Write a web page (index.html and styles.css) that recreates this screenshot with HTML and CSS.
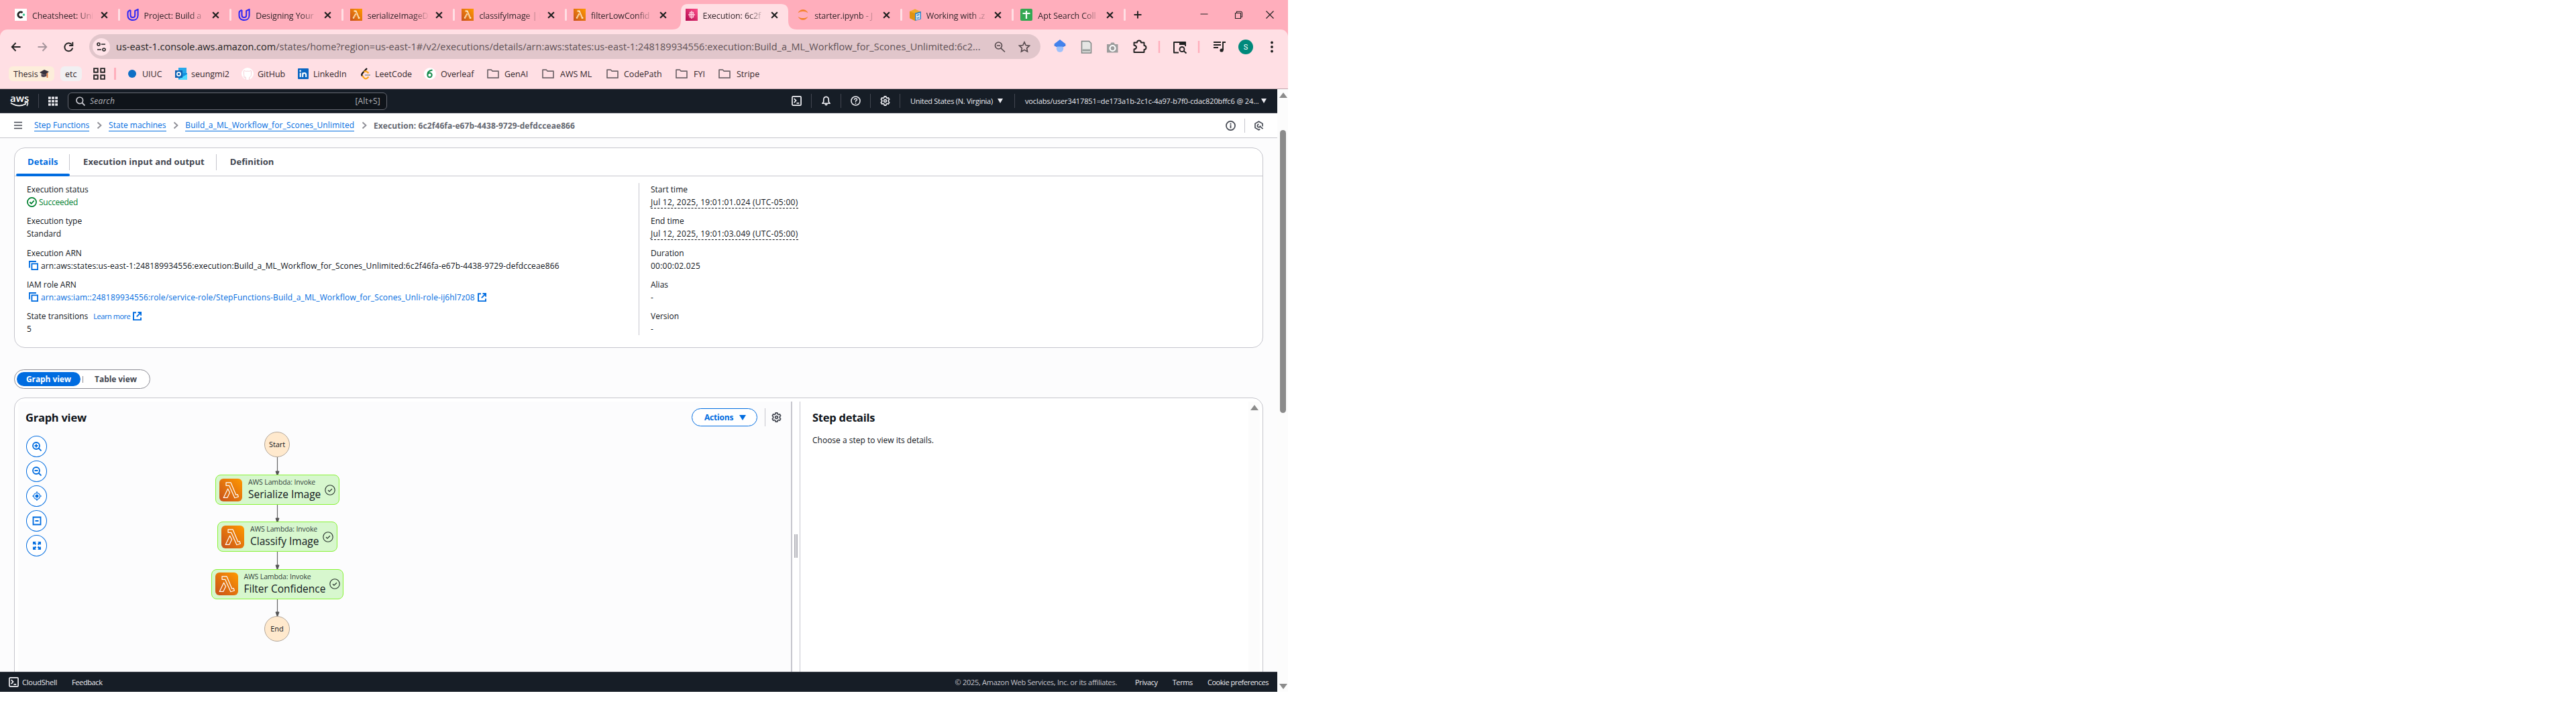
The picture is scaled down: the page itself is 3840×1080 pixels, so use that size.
FILE: index.html
```html
<!DOCTYPE html>
<html lang="en">
<head>
<meta charset="utf-8">
<title>Execution details | Step Functions</title>
<link rel="stylesheet" href="styles.css">
</head>
<body>
<svg class="sprite" aria-hidden="true">
  <linearGradient id="orange" x1="0" y1="1" x2="1" y2="0"><stop offset="0" stop-color="#c8511b"/><stop offset="1" stop-color="#ff9900"/></linearGradient>
  <linearGradient id="magenta" x1="0" y1="1" x2="1" y2="0"><stop offset="0" stop-color="#b0084d"/><stop offset="1" stop-color="#ff4f8b"/></linearGradient>
  <symbol id="lambda" viewBox="0 0 34 34"><g fill="none" stroke="#fff" stroke-width="1.2" stroke-linejoin="round"><path d="M10 5.8h7l7.8 18.4 2.4-.7 1.2 3.5-5.5 1.7-8.3-18.4H10z"/><path d="M12.6 15.2 6.2 28.4h5.6l3.7-7.7z"/></g></symbol>
  <symbol id="lambda-fav" viewBox="0 0 18 18"><rect width="18" height="18" fill="url(#orange)"/><path d="M5.500 3.500h3l4.300 10.300 1.600-.3M8.500 7.500l-4 7" fill="none" stroke="#ffe9c9" stroke-width="2.200"/><path d="M8.500 5l3.500 8.500M8.300 8.500l-2.800 5" fill="none" stroke="#e07a12" stroke-width=".6"/></symbol>
  <symbol id="udacity" viewBox="0 0 18 18"><g fill="none" stroke="#2f27f5" stroke-width="2"><path d="M5.500 2C2.500 3 1.500 4 1.500 6v4c0 3 1.800 5.600 4.700 6.600"/><path d="M5.500 2v7.500c0 2.400 1.500 3.600 3.300 3.600s3.400-1.200 3.400-3.600V3.200L16.600 1v9c0 4.500-3.500 7-7.500 7-1.200 0-2.200-.2-3-.5"/></g></symbol>
  <symbol id="x" viewBox="0 0 12 12"><path d="M2 2l8 8M10 2l-8 8" stroke="#1f1f1f" stroke-width="2"/></symbol>
  <symbol id="folder" viewBox="0 0 18 16"><path d="M1 2.200h5.500l1.800 2H17v10H1z" fill="none" stroke="#70656a" stroke-width="1.700" stroke-linejoin="round"/></symbol>
  <symbol id="shell" viewBox="0 0 16 16"><rect x="1" y="1" width="14" height="14" rx="1.500" fill="none" stroke="#f3f3f7" stroke-width="1.800"/><path d="M4 4.500L7 7.500 4 10.800M8 11.500h4" fill="none" stroke="#f3f3f7" stroke-width="1.800"/></symbol>
  <symbol id="gear" viewBox="0 0 16 16"><path d="M6.600 1h2.800l.5 1.900 1.400.8 1.900-.6 1.400 2.500-1.400 1.400v2l1.400 1.400-1.400 2.500-1.900-.6-1.400.8-.5 1.900H6.600l-.5-1.900-1.400-.8-1.900.6-1.400-2.500L2.800 9V7L1.400 5.600l1.400-2.500 1.900.6 1.400-.8z" fill="none" stroke="currentColor" stroke-width="1.800" stroke-linejoin="round"/><circle cx="8" cy="8" r="2" fill="none" stroke="currentColor" stroke-width="1.800"/></symbol>
  <symbol id="ext" viewBox="0 0 13 13"><path d="M5 1.200H1v11h11V8.500M7.500 1h4.700v4.700M12 1.200L5.800 7.400" fill="none" stroke="#006ce0" stroke-width="1.900"/></symbol>
  <symbol id="copy" viewBox="0 0 14 14"><path d="M.9 10.500V1h10" fill="none" stroke="#006ce0" stroke-width="1.800"/><rect x="4.400" y="4.400" width="8.700" height="8.700" fill="none" stroke="#006ce0" stroke-width="1.800"/></symbol>
  <symbol id="chev" viewBox="0 0 8 12"><path d="M1.500 1.500L6.500 6l-5 4.500" fill="none" stroke="#8c8c94" stroke-width="1.800"/></symbol>
  <symbol id="done" viewBox="0 0 16 16"><circle cx="8" cy="8" r="7.200" fill="none" stroke="#232f2a" stroke-width="1.100"/><path d="M5 8.200l2 1.900 4-3.800" fill="none" stroke="#232f2a" stroke-width="1.200"/></symbol>
</svg>

<div class="window">
  <div class="tabstrip">
    <div class="tab"><svg viewBox="0 0 18 18"><rect width="18" height="18" fill="#fff"/><path d="M11.500 6A4 4 0 1 0 11.500 12" fill="none" stroke="#222" stroke-width="2.800"/><circle cx="13.500" cy="9" r="1.800" fill="#3fc38e"/></svg><span>Cheatsheet: Uni</span><svg class="x"><use href="#x"/></svg></div>
    <div class="tab"><svg><use href="#udacity"/></svg><span>Project: Build a</span><svg class="x"><use href="#x"/></svg></div>
    <div class="tab"><svg><use href="#udacity"/></svg><span>Designing Your</span><svg class="x"><use href="#x"/></svg></div>
    <div class="tab"><svg><use href="#lambda-fav"/></svg><span>serializeImageD</span><svg class="x"><use href="#x"/></svg></div>
    <div class="tab"><svg><use href="#lambda-fav"/></svg><span>classifyImage | F</span><svg class="x"><use href="#x"/></svg></div>
    <div class="tab bare"><svg><use href="#lambda-fav"/></svg><span>filterLowConfid</span><svg class="x"><use href="#x"/></svg></div>
    <div class="tab active"><svg class="tabshape" viewBox="0 0 186 38"><path d="M0 38q13 0 13-13V11Q13 0 24 0h138q11 0 11 11v14q0 13 13 13z" fill="#ffdfe4"/></svg><svg viewBox="0 0 18 18"><rect width="18" height="18" fill="url(#magenta)"/><path d="M9 3v12M6.500 5.500h5v3h-5zM4 9h10M6.500 9.500v3h5v-3" fill="none" stroke="#ffc9dc" stroke-width="1.400"/></svg><span>Execution: 6c2f</span><svg class="x"><use href="#x"/></svg></div>
    <div class="tab"><svg viewBox="0 0 18 18"><path d="M1.500 6.500C3 2.800 6 1.300 9 1.300s6 1.500 7.500 5.200C14.500 4.600 12 3.900 9 3.900S3.500 4.600 1.500 6.500zM1.500 11.500C3 15.200 6 16.700 9 16.700s6-1.500 7.500-5.200c-2 1.900-4.500 2.600-7.500 2.600s-5.500-.7-7.500-2.600z" fill="#f5822b"/></svg><span>starter.ipynb - J</span><svg class="x"><use href="#x"/></svg></div>
    <div class="tab"><svg viewBox="0 0 18 18"><path d="M1 4l8-3.500L17 4v10l-8 4-8-4z" fill="#f0ab2a"/><path d="M1 4l8 3v11l-8-4z" fill="#e09312"/><path d="M9 6.500L18 4v11.500l-9 2.500z" fill="#2a82c9"/><path d="M11 8.500l5-1.300v3l-5 1.300zM11 13l5-1.200v2.700l-5 1.300z" fill="none" stroke="#fff" stroke-width="1.100"/></svg><span>Working with .z</span><svg class="x"><use href="#x"/></svg></div>
    <div class="tab"><svg viewBox="0 0 18 18"><rect width="18" height="18" rx="2" fill="#34a853"/><path d="M9 3v12M3.500 7h11" stroke="#fff" stroke-width="2.200"/></svg><span>Apt Search Coll</span><svg class="x"><use href="#x"/></svg></div>
    <svg class="newtab" viewBox="0 0 12 12"><path d="M6 .5v11M.5 6h11" stroke="#222" stroke-width="1.900"/></svg>
    <svg class="winbtns" viewBox="0 0 110 14"><path d="M.5 6h11M52.500 4.500h8v8h-8zM54.500 4.500v-2.200h6q2 0 2 2v6h-2" fill="none" stroke="#222" stroke-width="1.100"/><path d="M98.500 1.500l11 11M109.500 1.500l-11 11" stroke="#222" stroke-width="1.200"/></svg>
  </div>

  <div class="chrome">
    <div class="toolbar">
      <svg class="nav" viewBox="0 0 100 16"><g fill="none" stroke-width="1.900"><path d="M14.500 8H2M7.500 2L1.800 8l5.700 6" stroke="#222"/><path d="M40.500 8H53M47.500 2l5.700 6-5.700 6" stroke="#a5949b"/><path d="M91 4.500A6 6 0 1 0 92.200 9.500" stroke="#222"/><path d="M92.300.8v5.200h-5.200" stroke="#222"/></g></svg>
      <div class="omnibox">
        <svg class="site" viewBox="0 0 26 26"><circle cx="13" cy="13" r="13" fill="#ffe3e8"/><g fill="none" stroke="#222" stroke-width="1.600"><circle cx="9" cy="9" r="2"/><path d="M13 9h6M7 17h6"/><circle cx="17" cy="17" r="2"/></g></svg>
        <span class="url"><b>us-east-1.console.aws.amazon.com</b>/states/home?region=us-east-1#/v2/executions/details/arn:aws:states:us-east-1:248189934556:execution:Build_a_ML_Workflow_for_Scones_Unlimited:6c2...</span>
        <svg class="omni-icons" viewBox="0 0 54 18"><g fill="none" stroke="#54484c" stroke-width="1.600"><circle cx="6.500" cy="7" r="5"/><path d="M4 7h5M10 10.800l6 5.700M45 1.800l2.200 4.800 5.300.6-3.900 3.600 1 5.200-4.600-2.600-4.600 2.600 1-5.200-3.900-3.600 5.300-.6z"/></g></svg>
      </div>
      <svg class="exts" viewBox="0 0 340 30">
        <path d="M10 6l9 7-4 2H5l-4-2z" fill="#3b74dd"/><circle cx="10" cy="17.500" r="5.200" fill="#9ec1fb"/><path d="M1 11l9-7 9 7-5 3.500H6z" fill="#4382ec"/>
        <path d="M42.500 6.500h11l3 3V24h-14z" fill="#e6e6e4" stroke="#7d8583" stroke-width="1.500"/><path d="M43.500 18.500h11.500v3H43.500z" fill="#999f9c"/>
        <path d="M80 11h5l1.500-2.500h4L92 11h4.500v12.500H80z" fill="#9c9c9c"/><circle cx="88.500" cy="17" r="4" fill="#9c9c9c" stroke="#fff" stroke-width="2.200"/>
        <path d="M120.500 8.500h4.500q0-3 3-3t3 3h4.500v4.500q3 0 3 3t-3 3v4h-15v-4.500q3.500-.5 3.500-3t-3.500-3z" fill="none" stroke="#1f1f1f" stroke-width="1.900" stroke-linejoin="round"/>
        <path d="M158 6v18M217 6v18" stroke="#ffaebc" stroke-width="2.400"/>
        <path d="M187 23.500h-7V8h17v6" fill="none" stroke="#1f1f1f" stroke-width="1.900" stroke-linejoin="round"/><path d="M188 7h9.500v5H188z" fill="#1f1f1f"/><circle cx="192" cy="18.500" r="3.500" fill="none" stroke="#1f1f1f" stroke-width="1.900"/><path d="M194.500 21l4 3.500" stroke="#1f1f1f" stroke-width="1.900"/>
        <path d="M239 8h11M239 12h11M239 16h7M253 20V8h4" fill="none" stroke="#1f1f1f" stroke-width="1.900"/><circle cx="251" cy="20" r="2.600" fill="#1f1f1f"/>
        <circle cx="287" cy="15" r="11" fill="#00897b"/><g fill="#1f1f1f"><circle cx="326" cy="8.500" r="1.900"/><circle cx="326" cy="15" r="1.900"/><circle cx="326" cy="21.500" r="1.900"/></g>
        <text class="avatar" x="287" y="19" text-anchor="middle">S</text>
      </svg>
    </div>
    <div class="bookmarks">
      <span class="chip cream"><i>Thesis</i><svg viewBox="0 0 14 14"><path d="M0 5l7-4 7 3-7 5z" fill="#35303c"/><path d="M2.500 7v4q4 2 8-.5V6L7 9z" fill="#4a4152"/><path d="M11.500 6v7" stroke="#e0783c" stroke-width="1.800"/></svg></span>
      <span class="chip grey"><i>etc</i></span>
      <svg viewBox="0 0 16 16"><path d="M1 1h5v5H1zM10 1h5v5h-5zM1 10h5v5H1zM10 10h5v5h-5z" fill="none" stroke="#222" stroke-width="1.700"/></svg>
      <i class="bar"></i>
      <svg viewBox="0 0 18 18"><circle cx="9" cy="9" r="6" fill="#0f6fc5"/></svg><span>UIUC</span>
      <svg viewBox="0 0 18 18"><path d="M5 0h12v8H5z" fill="#28a8ea"/><path d="M5 8h13v9.500H5z" fill="#1490df"/><path d="M5 17.500l13-8V18H5z" fill="#50d9ff"/><rect y="4" width="11" height="11" fill="#0f62b4"/><circle cx="5.500" cy="9.500" r="2.600" fill="none" stroke="#fff" stroke-width="1.700"/></svg><span>seungmi2</span>
      <svg viewBox="0 0 18 18"><circle cx="9" cy="9" r="9" fill="#fff"/><path d="M6.500 18v-3Q3.500 15.500 3 13M11.500 18v-3.500Q15 13.500 14.500 8q.5-2-.2-3.600-1.500.1-2.600 1-2.700-.6-5.400 0-1.100-.9-2.600-1Q3 6 3.500 8 3 13.500 6.500 14.500" fill="#fff" stroke="#f6d3d9" stroke-width="1"/></svg><span>GitHub</span>
      <svg viewBox="0 0 18 18"><rect x="1" y="1" width="16" height="16" rx="1" fill="#0a66c2"/><path d="M4.700 7.500v6.500M8.200 14V7.500M8.200 11q0-3 2.500-3t2.500 3v3" fill="none" stroke="#fff" stroke-width="2"/><circle cx="4.700" cy="4.800" r="1.300" fill="#fff"/></svg><span>LinkedIn</span>
      <svg viewBox="0 0 18 18"><path d="M11 1L4 8.500q-1.500 2 0 4" fill="none" stroke="#111" stroke-width="2.200"/><path d="M4 12l3 3.500q2.500 2 5-.5l1.500-1.500M6.500 6.500q2.500-2.500 5 0L13.500 8" fill="none" stroke="#f9a61c" stroke-width="2.200"/><path d="M8 11h8" stroke="#aaa" stroke-width="2"/></svg><span>LeetCode</span>
      <svg viewBox="0 0 18 18"><circle cx="9" cy="9" r="9" fill="#fff"/><circle cx="8.500" cy="11" r="3.200" fill="none" stroke="#138a4b" stroke-width="2"/><path d="M5.500 10Q5 5 12.500 3.500" fill="none" stroke="#138a4b" stroke-width="2.200"/></svg><span>Overleaf</span>
      <svg><use href="#folder"/></svg><span>GenAI</span>
      <svg><use href="#folder"/></svg><span>AWS ML</span>
      <svg><use href="#folder"/></svg><span>CodePath</span>
      <svg><use href="#folder"/></svg><span>FYI</span>
      <svg><use href="#folder"/></svg><span>Stripe</span>
    </div>
  </div>

  <div class="viewport">
    <div class="page">
      <header class="awsnav">
        <div class="logo"><span>aws</span><svg viewBox="0 0 28 8"><path d="M1 1.500q12 7.500 23 1.200" fill="none" stroke="#fff" stroke-width="1.700"/><path d="M21.500 1.300q4-1 5 0 .3 2-1.500 4.700" fill="none" stroke="#fff" stroke-width="1.400"/></svg></div>
        <i class="vr"></i>
        <svg class="i14" viewBox="0 0 14 14"><path d="M0 2h14M0 7h14M0 12h14" stroke="#ebebf0" stroke-width="3.600" stroke-dasharray="3.800 1.300"/></svg>
        <div class="search"><svg viewBox="0 0 14 14"><circle cx="5.800" cy="5.800" r="4.800" fill="none" stroke="#c6c6cd" stroke-width="1.700"/><path d="M9 9l4.500 4.500" stroke="#c6c6cd" stroke-width="1.900"/></svg><em>Search</em><span>[Alt+S]</span></div>
        <div class="tools">
          <svg class="i15"><use href="#shell"/></svg><i class="vr"></i>
          <svg class="i15" viewBox="0 0 16 16"><path d="M8 1.500q-4 .2-4 5v3L2 12h12l-2-2.500v-3q0-4.800-4-5z" fill="none" stroke="#ebebf0" stroke-width="1.800" stroke-linejoin="round"/><path d="M5.500 13h5q-.5 2.500-2.500 2.500T5.500 13z" fill="#ebebf0"/></svg><i class="vr"></i>
          <svg class="i15" viewBox="0 0 16 16"><circle cx="8" cy="8" r="7" fill="none" stroke="#ebebf0" stroke-width="1.700"/><path d="M5.800 6.400q0-2.100 2.200-2.100t2.200 1.900Q10.200 7.500 8 8v1.700M8 10.700v1.700" fill="none" stroke="#ebebf0" stroke-width="1.500"/></svg><i class="vr"></i>
          <svg class="i15"><use href="#gear"/></svg><i class="vr"></i>
        </div>
        <span class="region"><b>United States (N. Virginia)</b><i class="tri"></i></span><i class="vr"></i>
        <span class="account"><b>voclabs/user3417851=de173a1b-2c1c-4a97-b7f0-cdac820bffc6 @ 24...</b><i class="tri"></i></span>
      </header>

      <nav class="crumbs">
        <svg class="burger" viewBox="0 0 12 12"><path d="M0 1.500h12M0 6h12M0 10.500h12" stroke="#424650" stroke-width="1.600"/></svg>
        <a>Step Functions</a><svg class="chev"><use href="#chev"/></svg>
        <a>State machines</a><svg class="chev"><use href="#chev"/></svg>
        <a class="wide">Build_a_ML_Workflow_for_Scones_Unlimited</a><svg class="chev"><use href="#chev"/></svg>
        <b>Execution: 6c2f46fa-e67b-4438-9729-defdcceae866</b>
        <div class="crumb-tools">
          <svg class="i15" viewBox="0 0 16 16"><circle cx="8" cy="8" r="7" fill="none" stroke="#424650" stroke-width="1.800"/><path d="M8 4v2M8 7v5" stroke="#424650" stroke-width="1.900"/></svg><i class="vr"></i>
          <svg class="i15" viewBox="0 0 16 16"><path d="M13.900 9V4.700L8 1.300 2.100 4.700v6.600L8 14.700l2-1.200" fill="none" stroke="#424650" stroke-width="1.700"/><path d="M9.500 9l5 4M8 5.800A2.300 2.300 0 1 0 10.300 8" stroke="#424650" stroke-width="1.800" fill="none"/></svg>
        </div>
      </nav>

      <main>
        <section class="card details">
          <div class="tabs"><b class="on">Details</b><b class="io">Execution input and output</b><b>Definition</b></div>
          <div class="cols">
            <dl>
              <dt>Execution status</dt><dd class="ok"><svg viewBox="0 0 16 16"><circle cx="8" cy="8" r="7" fill="none" stroke="#00802f" stroke-width="1.800"/><path d="M4.700 8l2.400 2.400 4.300-4.600" fill="none" stroke="#00802f" stroke-width="1.900"/></svg><i>Succeeded</i></dd>
              <dt>Execution type</dt><dd>Standard</dd>
              <dt>Execution ARN</dt><dd class="arn"><svg class="cp"><use href="#copy"/></svg><i>arn:aws:states:us-east-1:248189934556:execution:Build_a_ML_Workflow_for_Scones_Unlimited:6c2f46fa-e67b-4438-9729-defdcceae866</i></dd>
              <dt>IAM role ARN</dt><dd class="arn"><svg class="cp"><use href="#copy"/></svg><a>arn:aws:iam::248189934556:role/service-role/StepFunctions-Build_a_ML_Workflow_for_Scones_Unli-role-ij6hl7z08</a><svg class="ex"><use href="#ext"/></svg></dd>
              <dt>State transitions<a class="more">Learn more</a><svg class="ex"><use href="#ext"/></svg></dt><dd>5</dd>
            </dl>
            <dl>
              <dt>Start time</dt><dd><u>Jul 12, 2025, 19:01:01.024 (UTC-05:00)</u></dd>
              <dt>End time</dt><dd><u>Jul 12, 2025, 19:01:03.049 (UTC-05:00)</u></dd>
              <dt>Duration</dt><dd class="digits">00:00:02.025</dd>
              <dt>Alias</dt><dd>-</dd>
              <dt>Version</dt><dd>-</dd>
            </dl>
          </div>
        </section>

        <div class="segment"><b class="on">Graph view</b><i class="mid"></i><b>Table view</b></div>

        <section class="card split">
          <div class="graph">
            <div class="graph-head"><h2>Graph view</h2><span class="btn"><b>Actions</b><i class="tri"></i></span><i class="vr"></i><svg class="i15"><use href="#gear"/></svg></div>
            <div class="zoomers">
              <span><svg viewBox="0 0 14 14"><circle cx="6" cy="6" r="5" /><path d="M6 3.500v5M3.500 6h5M9.500 9.500l4 4"/></svg></span>
              <span><svg viewBox="0 0 14 14"><circle cx="6" cy="6" r="5" /><path d="M3.500 6h5M9.500 9.500l4 4"/></svg></span>
              <span><svg viewBox="0 0 14 14"><circle class="thin" cx="7" cy="7" r="4.700"/><circle class="dot" cx="7" cy="7" r="2.500"/><path class="thin" d="M7 0v3M7 11v3M0 7h3M11 7h3"/></svg></span>
              <span><svg viewBox="0 0 14 14"><path d="M1.500 1.500h11v11h-11zM4.500 7h5"/></svg></span>
              <span><svg viewBox="0 0 14 14"><path class="dot" d="M1 1h5l-1.500 1.500 1.800 1.800-1.800 1.800-1.800-1.800L1 6zM13 1v5l-1.500-1.500-1.800 1.800-1.900-1.900 1.800-1.900L8 1zM1 13V8l1.500 1.500 1.900-1.800 1.900 1.900-1.800 1.900L6 13zM13 13H8l1.500-1.500-1.800-1.900 1.900-1.900 1.900 1.800L13 8z"/></svg></span>
            </div>
            <div class="canvas">
              <svg class="edges" viewBox="0 0 37 256"><path d="M18.500 0v256" stroke="#666" stroke-width="1.200"/><path d="M16 21h5l-2.500 7zM16 91h5l-2.500 7zM16 161h5l-2.500 7zM16 231h5l-2.500 7z" fill="#545454" stroke="#545454"/></svg>
              <div class="round start">Start</div>
              <div class="node n1"><svg class="lam"><use href="#lambda"/></svg><p><small>AWS Lambda: Invoke</small><i>Serialize Image</i></p><svg class="dn"><use href="#done"/></svg></div>
              <div class="node n2"><svg class="lam"><use href="#lambda"/></svg><p><small>AWS Lambda: Invoke</small><i>Classify Image</i></p><svg class="dn"><use href="#done"/></svg></div>
              <div class="node n3"><svg class="lam"><use href="#lambda"/></svg><p><small>AWS Lambda: Invoke</small><i>Filter Confidence</i></p><svg class="dn"><use href="#done"/></svg></div>
              <div class="round end">End</div>
            </div>
          </div>
          <div class="gutter"><i></i></div>
          <div class="step"><h2>Step details</h2><p>Choose a step to view its details.</p></div>
          <div class="inner-scroll"><i class="up"></i></div>
        </section>
      </main>

      <footer>
        <svg class="i15"><use href="#shell"/></svg><b>CloudShell</b><b>Feedback</b>
        <span>© 2025, Amazon Web Services, Inc. or its affiliates.</span><b>Privacy</b><b>Terms</b><b>Cookie preferences</b>
      </footer>
    </div>
    <div class="scroll"><i class="up"></i><i class="thumb"></i><i class="down"></i></div>
  </div>
</div>
</body>
</html>
```
FILE: styles.css
```css
* { box-sizing: border-box; }
body { margin: 0; background: #fff; font-family: "Open Sans", "Noto Sans", sans-serif; font-size: 12px; color: #0f141a; white-space: nowrap; }
i { font-style: normal; }
h2, p, dl, dt, dd { margin: 0; }
svg { display: block; flex: none; }
.sprite { position: absolute; width: 0; height: 0; }
.window { width: 1920px; height: 1032px; display: flex; flex-direction: column; overflow: hidden; }

/* browser tabs */
.tabstrip { height: 44px; background: #ffaebc; display: flex; align-items: center; padding-left: 12px; flex: none; font-size: 12.5px; position: relative; z-index: 1; }
.tab { width: 166.6px; flex: none; height: 44px; display: flex; align-items: center; padding-left: 10px; position: relative; color: #33262b; }
.tab > svg { width: 18px; height: 18px; }
.tab span { width: 97px; margin: 3px 4px 0 8px; letter-spacing: -.1px; -webkit-mask: linear-gradient(90deg, #000 68px, transparent 92px); mask: linear-gradient(90deg, #000 68px, transparent 92px); }
.tab > .x { width: 13px; height: 13px; }
.tab::after { content: ""; width: 3px; height: 18px; border-radius: 2px; background: #ffdfe4; margin-left: 14px; margin-top: -1px; }
.tab.bare::after, .tab.active::after { visibility: hidden; }
.tab.active { z-index: 1; }
.tab > .tabshape { position: absolute; z-index: -1; left: -10px; top: 6px; width: 186px; height: 38px; }
.newtab { width: 12px; height: 12px; margin-left: 12px; }
.winbtns { width: 110px; height: 14px; margin-left: 87px; }

/* toolbar */
.chrome { height: 89px; background: #ffdfe4; border-bottom: 1px solid #bfa8ae; flex: none; box-shadow: 0 -10px 0 #ffaebc; border-radius: 11px 11px 0 0; }
.toolbar { height: 51px; display: flex; align-items: center; padding-left: 16px; }
.nav { width: 100px; height: 16px; margin-right: 17px; }
.omnibox { width: 1418px; flex: none; height: 37px; border-radius: 19px; background: #e1c6cb; display: flex; align-items: center; padding-left: 5px; }
.site { width: 26px; height: 26px; }
.url { width: 1309px; margin-left: 9px; font-size: 14.5px; color: #5f5256; }
.url b { font-weight: 400; color: #1f1f1f; }
.omni-icons { width: 54px; height: 18px; }
.exts { width: 340px; height: 30px; margin-left: 19px; }
.avatar { font: 11px Roboto, sans-serif; fill: #fff; }
.bookmarks { height: 30px; display: grid; align-items: center; font-size: 12.5px; color: #33262b; padding-left: 13px;
  grid-template-columns: 77px 49px 31px 18px 24px 49px 24px 75px 24px 59px 24px 69px 23px 73px 25px 69px 26px 56px 27px 69px 26px 77px 27px 37px 27px 60px; }
.bookmarks > svg { width: 18px; height: 18px; }
.chip { height: 22px; border-radius: 6px; display: flex; align-items: center; padding: 0 7px; gap: 2px; justify-self: start; }
.chip svg { width: 14px; height: 14px; }
.cream { background: #fdeedb; width: 68px; }
.grey { background: #f1f0f2; width: 32px; }
.bookmarks .bar { width: 2.5px; height: 18px; background: #ffaebc; }

/* page frame */
.viewport { flex: 1; display: flex; min-height: 0; }
.page { width: 1904px; display: flex; flex-direction: column; background: #fcfcfd; }
.scroll { width: 16px; background: #fcfcfc; display: flex; flex-direction: column; align-items: center; padding: 5px 0 4px 1px; }
.up { border: 6px solid transparent; border-top: 0; border-bottom: 8px solid #8b8b8b; }
.down { border: 6px solid transparent; border-bottom: 0; border-top: 8px solid #8b8b8b; margin-top: auto; }
.thumb { width: 9px; height: 422px; border-radius: 5px; background: #8b8b8b; margin-top: 48px; }
.tri { display: inline-block; border: 4px solid transparent; border-bottom: 0; border-top: 7px solid currentColor; }
.i14 { width: 14px; height: 14px; }
.i15 { width: 15px; height: 15px; }
.vr { width: 1px; height: 21px; background: #424650; }

/* console header */
.awsnav { height: 36px; flex: none; background: #161d26; border-bottom: 1px solid #424650; display: flex; align-items: center; padding-left: 15px; color: #ebebf0; }
.awsnav > * { flex: none; }
.awsnav b { font-weight: 500; font-size: 11px; letter-spacing: -.27px; }
.awsnav .account b { letter-spacing: -.12px; width: 352px; }
.logo { width: 42px; display: flex; flex-direction: column; font: 600 15px/11px "Open Sans", sans-serif; color: #fff; }
.logo svg { width: 28px; height: 8px; }
.awsnav .i14 { margin: 0 15px 0 14px; }
.search { width: 476px; height: 26px; border: 1px solid #656871; border-radius: 6px; background: #0f141a; display: flex; align-items: center; padding: 0 9px 0 11px; color: #b4b4bb; letter-spacing: .2px; }
.search svg { width: 14px; height: 14px; margin-right: 7px; }
.search span { margin-left: auto; }
.tools { display: flex; align-items: center; gap: 14px; margin-left: 603px; }
.region { width: 170px; padding-left: 15px; display: flex; align-items: center; }
.region b { width: 130px; }
.account { padding-left: 15px; display: flex; align-items: center; }

.crumbs { height: 37px; flex: none; background: #fff; border-bottom: 1px solid #c6c6cd; display: flex; align-items: center; padding-left: 21px; }
.burger { width: 12px; height: 12px; margin-right: 18px; }
.crumbs a { color: #006ce0; border-bottom: 1px solid #006ce0; line-height: 16px; }
.crumbs .wide { letter-spacing: .123px; }
.crumbs b { color: #656871; font-weight: 700; letter-spacing: .091px; }
.chev { width: 8px; height: 12px; margin: 0 10.4px; }
.crumb-tools { margin: 0 20px 0 auto; display: flex; align-items: center; gap: 13px; }
.crumb-tools .vr { background: #c6c6cd; }

main { flex: 1; min-height: 0; padding: 14px 21px 0; overflow: hidden; }
.card { background: #fff; border: 1px solid #c6c6cd; border-radius: 16px; }
.details { height: 299px; }
.tabs { height: 42px; display: flex; align-items: center; border-bottom: 1px solid #c6c6cd; padding-left: 2px; font-size: 13px; color: #424650; }
.tabs b { height: 42px; display: flex; align-items: center; padding: 0 19px 2px 17px; position: relative; letter-spacing: .05px; }
.tabs b + b { padding: 0 18px 2px 20px; }
.tabs .io { letter-spacing: .1px; }
.tabs b:not(:last-child)::after { content: ""; position: absolute; right: 0; top: 9px; height: 24px; width: 1px; background: #c6c6cd; }
.tabs .on { color: #006ce0; width: 80px; }
.tabs .on::before { content: ""; position: absolute; left: 0; right: 0; bottom: 0; height: 4px; border-radius: 2px; background: #006ce0; }
.cols { display: flex; padding: 10px 0 0 18px; }
.cols dl { width: 912px; height: 227px; line-height: 19px; }
.cols dl + dl { border-left: 1px solid #c6c6cd; padding-left: 17px; }
dt, dd { height: 19px; display: flex; align-items: center; }
dd { margin-bottom: 9.3px; }
dd a, dt a { color: #006ce0; }
.ok { color: #00802f; gap: 3px; letter-spacing: -.24px; }
.ok svg { width: 15px; height: 15px; }
.arn { letter-spacing: .141px; }
.digits { letter-spacing: .23px; }
.cp { width: 14px; height: 14px; margin: 0 4px 0 3px; }
.ex { width: 13px; height: 13px; margin-left: 4px; }
.more { margin-left: 8px; font-size: 11px; letter-spacing: -.45px; }
u { text-decoration: none; border-bottom: 1px dashed #0f141a; line-height: 17px; letter-spacing: .273px; }

.segment { width: 203px; height: 29px; margin: 32px 0 13px; border: 1px solid #8c8c94; border-radius: 15px; background: #fff; display: flex; align-items: center; padding: 0 3px; color: #424650; }
.segment b { height: 21px; display: flex; align-items: center; justify-content: center; border-radius: 11px; width: 96px; letter-spacing: -.07px; }
.segment .on { background: #006ce0; color: #fff; }
.mid { width: 1px; height: 10px; background: #8c8c94; margin: 0 1px 0 3px; }

.split { height: 440px; padding: 5px 4px 0 5px; display: flex; }
.graph { width: 1152px; background: #fcfcfd; padding: 10px 14px 0 11px; }
.graph-head { display: flex; align-items: center; height: 27px; color: #424650; }
h2 { font-size: 16.5px; line-height: 27px; letter-spacing: -.25px; color: #0f141a; }
.btn { margin-left: auto; width: 98px; height: 27px; border: 1.5px solid #006ce0; border-radius: 14px; background: #fff; color: #006ce0; display: flex; align-items: center; padding-left: 18px; gap: 9px; letter-spacing: -.2px; }
.btn .tri { border-width: 8px 5px 0; }
.graph-head .vr { height: 27px; margin: 0 9px 0 11px; background: #c6c6cd; }
.zoomers { position: absolute; margin: 14px 0 0 1px; display: grid; gap: 5px; }
.zoomers span { width: 31px; height: 32px; border: 1px solid #006ce0; border-radius: 50%; background: #fff; display: grid; place-items: center; }
.zoomers svg { width: 14px; height: 14px; fill: none; stroke: #006ce0; stroke-width: 1.8; }
.zoomers .thin { stroke-width: 1.2; }
.zoomers .dot { fill: #006ce0; stroke: none; }

/* workflow diagram */
.canvas { position: relative; width: 300px; height: 320px; margin-left: 262px; }
.edges { position: absolute; left: 94.5px; top: 46px; width: 37px; height: 256px; }
.round { position: absolute; left: 94px; width: 38px; height: 38px; border-radius: 50%; background: #ffe9cd; border: 1px solid #b3a79a; display: grid; place-items: center; font-size: 11px; letter-spacing: -.1px; padding-bottom: 2px; }
.start { top: 8px; }
.end { top: 283px; }
.node { position: absolute; height: 45px; border: 1.5px solid #89f336; border-radius: 8px; background: #d7f7ce; display: flex; align-items: center; padding-left: 5px; }
.n1 { left: 21px; top: 72px; width: 184.5px; }
.n2 { left: 24px; top: 142px; width: 178.5px; }
.n3 { left: 14.5px; top: 212.5px; width: 197.5px; }
.lam { width: 34px; height: 34px; border-radius: 6px; background: linear-gradient(45deg, #c8511b, #f90); }
.node p { margin-left: 9px; width: 114px; }
.n2 p { width: 108px; }
.n3 p { width: 127px; }
.node small, .node p i { display: block; }
.node small { font-size: 10.5px; line-height: 14px; letter-spacing: -.13px; color: #33423c; margin-top: -1px; }
.node p i { font-size: 15.5px; line-height: 22px; }
.dn { width: 16px; height: 16px; }

.gutter { width: 14px; border: solid #c6c6cd; border-width: 0 1.5px 0 2px; display: flex; justify-content: center; padding-top: 198px; }
.gutter i { width: 5px; height: 35px; border: solid #b4b4bb; border-width: 0 2px; }
.step { flex: 1; padding: 10px 0 0 18px; }
.step p { margin-top: 11px; line-height: 20px; }
.inner-scroll { width: 17px; background: #fcfcfc; display: flex; justify-content: center; align-items: flex-start; padding-top: 5px; }

footer { height: 30px; flex: none; background: #161d26; border-top: 1px solid #424650; color: #ebebf0; font-size: 11px; display: flex; align-items: center; padding: 0 13px; letter-spacing: -.38px; }
footer b { font-weight: 400; }
footer .i15 { margin-right: 5px; }
footer b:first-of-type { letter-spacing: -.23px; }
footer b + b { margin-left: 22px; }
footer span { margin-left: auto; color: #c6c6cd; letter-spacing: -.29px; }
footer span + b { margin-left: 27px; }
footer b:last-child { letter-spacing: -.45px; }
```
